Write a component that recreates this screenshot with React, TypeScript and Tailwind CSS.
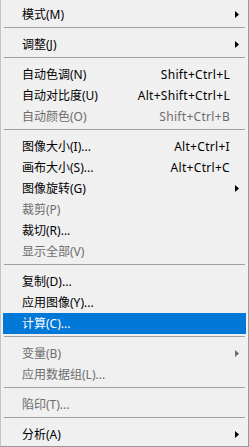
import React from 'react';

type Entry =
  | { sep: true }
  | {
      sep?: false;
      label: string;
      shortcut?: string;
      sub?: boolean;
      disabled?: boolean;
      active?: boolean;
    };

const entries: Entry[] = [
  { label: '模式(M)', sub: true },
  { sep: true },
  { label: '调整(J)', sub: true },
  { sep: true },
  { label: '自动色调(N)', shortcut: 'Shift+Ctrl+L' },
  { label: '自动对比度(U)', shortcut: 'Alt+Shift+Ctrl+L' },
  { label: '自动颜色(O)', shortcut: 'Shift+Ctrl+B', disabled: true },
  { sep: true },
  { label: '图像大小(I)...', shortcut: 'Alt+Ctrl+I' },
  { label: '画布大小(S)...', shortcut: 'Alt+Ctrl+C' },
  { label: '图像旋转(G)', sub: true },
  { label: '裁剪(P)', disabled: true },
  { label: '裁切(R)...' },
  { label: '显示全部(V)', disabled: true },
  { sep: true },
  { label: '复制(D)...' },
  { label: '应用图像(Y)...' },
  { label: '计算(C)...', active: true },
  { sep: true },
  { label: '变量(B)', sub: true, disabled: true },
  { label: '应用数据组(L)...', disabled: true },
  { sep: true },
  { label: '陷印(T)...', disabled: true },
  { sep: true },
  { label: '分析(A)', sub: true },
];

function Arrow({ color }: { color: string }) {
  return (
    <svg width="4" height="7" viewBox="0 0 4 7" className="absolute left-[232px] top-[7px]">
      <path d="M0 0 L4 3.5 L0 7 Z" fill={color} />
    </svg>
  );
}

export default function App() {
  return (
    <div
      className="w-[249px] h-[447px] bg-[#f0f0f0] border-l border-r border-b border-l-[#c4c4c4] border-r-[#979797] border-b-[#979797] pt-[4px] text-[12px] leading-[21px]"
      style={{ fontFamily: '"Noto Sans", "Noto Sans CJK SC", sans-serif' }}
    >
      {entries.map((e, i) => {
        if (e.sep) {
          return (
            <div key={i} className="h-[9px] pt-[2px] px-[3px]">
              <div className="h-px bg-[#a0a0a0]" />
            </div>
          );
        }
        const color = e.active ? 'text-white' : e.disabled ? 'text-[#6d6d6d]' : 'text-black';
        return (
          <div
            key={i}
            className={`relative h-[21px] mx-[2px] flex items-center ${color} ${
              e.active ? 'bg-[#0078d7]' : ''
            }`}
          >
            <span className="pl-[19px] whitespace-nowrap">{e.label}</span>
            {e.shortcut && (
              <span className="absolute right-[16px] top-0 whitespace-nowrap tracking-[0.3px]">
                {e.shortcut}
              </span>
            )}
            {e.sub && <Arrow color={e.disabled ? '#6d6d6d' : e.active ? '#fff' : '#000'} />}
          </div>
        );
      })}
    </div>
  );
}
